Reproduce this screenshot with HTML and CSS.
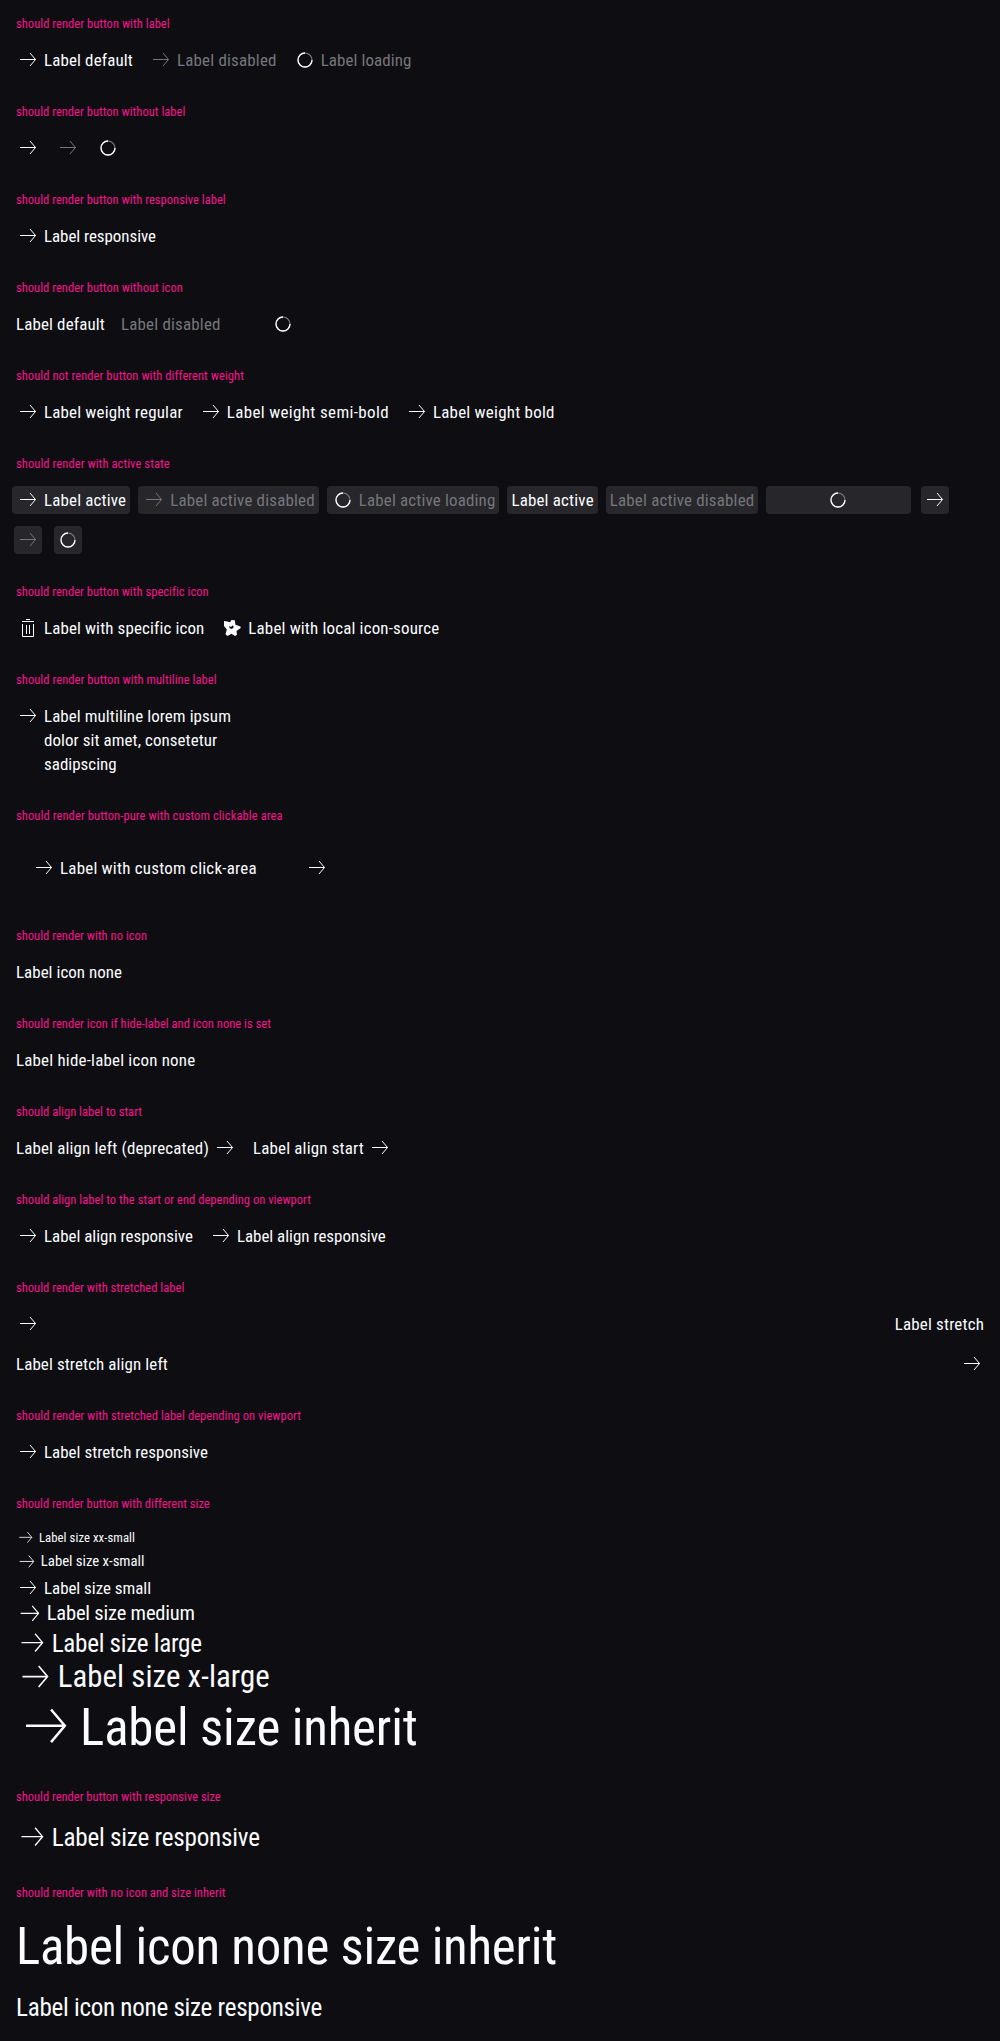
FILE: index.html
```html
<!DOCTYPE html>
<html lang="en">
<head>
<meta charset="utf-8">
<title>Button Pure</title>
<link rel="stylesheet" href="styles.css">
</head>
<body>
<svg class="defs" aria-hidden="true">
  <symbol id="arrow" viewBox="0 0 24 24"><path d="M4 11.5h15.5M14 5l5.5 6.5L14 18" fill="none" stroke="currentColor"/></symbol>
  <symbol id="spin" viewBox="0 0 24 24"><circle cx="12" cy="12" r="7" fill="none" stroke="#7e7f85" stroke-width="1.2"/><path d="M12 5a7 7 0 1 0 7 7" fill="none" stroke="#fbfcff" stroke-width="1.3"/></symbol>
  <symbol id="trash" viewBox="0 0 24 24"><path d="M10 3.5h4M6 5.5h12M6.500 8v12.500h11V8M10.500 9v9M13.500 9v9" fill="none" stroke="currentColor"/></symbol>
  <symbol id="star" viewBox="0 0 24 24"><path fill="currentColor" fill-rule="evenodd" d="M4 4.900l3.300.7 2.700.700L11.500 4l3.300.2.700 4.500L20.500 10.500l.200 1.500-4.200 3 .500 3.700-2 1.300-3.500-2.200L7.500 20l-2-1.800 1.300-4.700L4 10zM9.300 9.800v1.800l1.800 1.400 2-.8.500-1.600-1-1.300-.9 1.300-1.400.2z"/></symbol>
</svg>

<section>
  <h2 data-w="153.7">should render button with label</h2>
  <div class="row">
    <button><svg><use href="#arrow"/></svg><span data-w="89">Label default</span></button>
    <button class="disabled"><svg><use href="#arrow"/></svg><span data-w="99.7">Label disabled</span></button>
    <button class="disabled"><svg><use href="#spin"/></svg><span data-w="90.7">Label loading</span></button>
  </div>
</section>
<section>
  <h2 data-w="169.3">should render button without label</h2>
  <div class="row">
    <button><svg><use href="#arrow"/></svg></button>
    <button class="disabled"><svg><use href="#arrow"/></svg></button>
    <button><svg><use href="#spin"/></svg></button>
  </div>
</section>
<section>
  <h2 data-w="209.7">should render button with responsive label</h2>
  <div class="row"><button><svg><use href="#arrow"/></svg><span data-w="112">Label responsive</span></button></div>
</section>
<section>
  <h2 data-w="166.8">should render button without icon</h2>
  <div class="row">
    <button><span data-w="89">Label default</span></button>
    <button class="disabled"><span data-w="99.7">Label disabled</span></button>
    <button class="busy short"><svg><use href="#spin"/></svg></button>
  </div>
</section>
<section>
  <h2 data-w="227.9">should not render button with different weight</h2>
  <div class="row">
    <button><svg><use href="#arrow"/></svg><span data-w="138.8">Label weight regular</span></button>
    <button><svg><use href="#arrow"/></svg><span data-w="162.1">Label weight semi-bold</span></button>
    <button><svg><use href="#arrow"/></svg><span data-w="121.8">Label weight bold</span></button>
  </div>
</section>
<section>
  <h2 data-w="153.7">should render with active state</h2>
  <div class="row">
    <button class="active"><svg><use href="#arrow"/></svg><span data-w="82.2">Label active</span></button>
    <button class="active disabled"><svg><use href="#arrow"/></svg><span data-w="144.6">Label active disabled</span></button>
    <button class="active disabled"><svg><use href="#spin"/></svg><span data-w="136.6">Label active loading</span></button>
    <button class="active"><span data-w="82.4">Label active</span></button>
    <button class="active disabled"><span data-w="144.6">Label active disabled</span></button>
    <button class="active busy"><svg><use href="#spin"/></svg></button>
    <button class="active bare"><svg><use href="#arrow"/></svg></button>
    <button class="active bare disabled"><svg><use href="#arrow"/></svg></button>
    <button class="active bare"><svg><use href="#spin"/></svg></button>
  </div>
</section>
<section>
  <h2 data-w="192">should render button with specific icon</h2>
  <div class="row">
    <button><svg><use href="#trash"/></svg><span data-w="159.4">Label with specific icon</span></button>
    <button><svg><use href="#star"/></svg><span data-w="191">Label with local icon-source</span></button>
  </div>
</section>
<section>
  <h2 data-w="200.7">should render button with multiline label</h2>
  <div class="row"><button><svg><use href="#arrow"/></svg><span class="lines"><span data-w="187">Label multiline lorem ipsum</span><span data-w="173.3">dolor sit amet, consetetur</span><span data-w="72.7">sadipscing</span></span></button></div>
</section>
<section>
  <h2 data-w="266.6">should render button-pure with custom clickable area</h2>
  <div class="row">
    <button class="roomy"><svg><use href="#arrow"/></svg><span data-w="196.8">Label with custom click-area</span></button>
    <button class="roomy"><svg><use href="#arrow"/></svg></button>
  </div>
</section>
<section>
  <h2 data-w="131">should render with no icon</h2>
  <div class="row"><button><span data-w="106">Label icon none</span></button></div>
</section>
<section>
  <h2 data-w="255">should render icon if hide-label and icon none is set</h2>
  <div class="row"><button><span data-w="179.3">Label hide-label icon none</span></button></div>
</section>
<section>
  <h2 data-w="126">should align label to start</h2>
  <div class="row">
    <button><span data-w="193">Label align left (deprecated)</span><svg><use href="#arrow"/></svg></button>
    <button><span data-w="111">Label align start</span><svg><use href="#arrow"/></svg></button>
  </div>
</section>
<section>
  <h2 data-w="295">should align label to the start or end depending on viewport</h2>
  <div class="row">
    <button><svg><use href="#arrow"/></svg><span data-w="148.9">Label align responsive</span></button>
    <button><svg><use href="#arrow"/></svg><span data-w="148.9">Label align responsive</span></button>
  </div>
</section>
<section>
  <h2 data-w="168.3">should render with stretched label</h2>
  <div class="row">
    <button class="stretch"><svg><use href="#arrow"/></svg><span data-w="89.2">Label stretch</span></button>
    <button class="stretch"><span data-w="152">Label stretch align left</span><svg><use href="#arrow"/></svg></button>
  </div>
</section>
<section>
  <h2 data-w="285">should render with stretched label depending on viewport</h2>
  <div class="row"><button><svg><use href="#arrow"/></svg><span data-w="164">Label stretch responsive</span></button></div>
</section>
<section>
  <h2 data-w="193.7">should render button with different size</h2>
  <div class="sizes">
    <button class="xxs"><svg><use href="#arrow"/></svg><span data-w="96">Label size xx-small</span></button>
    <button class="xs"><svg><use href="#arrow"/></svg><span data-w="103.5">Label size x-small</span></button>
    <button class="sm"><svg><use href="#arrow"/></svg><span data-w="107">Label size small</span></button>
    <button class="md"><svg><use href="#arrow"/></svg><span data-w="148">Label size medium</span></button>
    <button class="lg"><svg><use href="#arrow"/></svg><span data-w="150">Label size large</span></button>
    <button class="xl"><svg><use href="#arrow"/></svg><span data-w="212">Label size x-large</span></button>
    <button class="inherit"><svg><use href="#arrow"/></svg><span data-w="337.5">Label size inherit</span></button>
  </div>
</section>
<section>
  <h2 data-w="204.7">should render button with responsive size</h2>
  <div class="row"><button class="lg"><svg><use href="#arrow"/></svg><span data-w="208">Label size responsive</span></button></div>
</section>
<section>
  <h2 data-w="209.4">should render with no icon and size inherit</h2>
  <div class="plain">
    <button class="inherit"><span data-w="541">Label icon none size inherit</span></button>
    <button class="lg"><span data-w="306">Label icon none size responsive</span></button>
  </div>
</section>
<script src="tracking.js"></script>
</body>
</html>
```
FILE: styles.css
```css
* { box-sizing: border-box; }

body {
  margin: 0;
  padding: 16px 16px 0;
  background: #0e0e12;
  color: #fbfcff;
  font-family: "Roboto Condensed", Roboto, sans-serif;
  font-stretch: 75%;
  font-size: 16px;
  line-height: 24px;
}

.defs { display: none; }

section { margin-bottom: 32px; }

h2 {
  width: max-content;
  margin: 0 0 16px;
  color: #f5148d;
  font-size: 12.5px;
  font-weight: 400;
  line-height: 16px;
}

.row { display: flex; flex-wrap: wrap; gap: 16px; }

button {
  --icon: 24px;
  display: flex;
  gap: 4px;
  margin: 0;
  padding: 0;
  border: 0;
  border-radius: 4px;
  background: none;
  color: inherit;
  font: inherit;
  line-height: var(--icon);
  text-align: left;
}

button svg { flex: none; width: var(--icon); height: var(--icon); }
button span { display: block; white-space: nowrap; }
button [data-w] { font-size: 1.06em; }

.disabled { color: #75767b; }
.active { margin: -2px -4px; padding: 2px 4px; background: #26262b; }
.bare { margin: -2px; padding: 2px; }
.busy { width: 144.6px; justify-content: center; }
.active.busy { padding-right: 5px; }
.short { width: 91.7px; margin-right: -1px; }
.roomy { padding: 16px; }
.stretch { width: 100%; justify-content: space-between; }

.sizes { display: flex; flex-direction: column; }
.xxs { --icon: 19.5px; gap: 3.5px; margin-bottom: 3.5px; font-size: 12px; }
.xs { --icon: 21.8px; gap: 3px; margin-bottom: 3px; font-size: 14px; }
.md { --icon: 27.8px; gap: 3px; font-size: 19.4px; }
.lg { --icon: 32.7px; gap: 3px; font-size: 23.7px; }
.xl { --icon: 38.8px; gap: 3px; font-size: 29.1px; }
.inherit { --icon: 60.1px; font-size: 48px; }
.lg span { margin: 1px 0 -1px; }
.sizes .lg, .sizes .xl { margin-top: -1px; }
.sizes .inherit { margin-top: -0.5px; }
.sizes .inherit span { margin: 1px 0 -1px; }

.plain { display: flex; flex-direction: column; gap: 14px; }
```
FILE: tracking.js
```
// Tracks each label out to its nominal width (data-w, in px).
for (const el of document.querySelectorAll("[data-w]")) {
  const range = document.createRange();
  range.selectNodeContents(el);
  const natural = range.getBoundingClientRect().width;
  el.style.letterSpacing = (Number(el.dataset.w) - natural) / el.textContent.length + "px";
}
```
